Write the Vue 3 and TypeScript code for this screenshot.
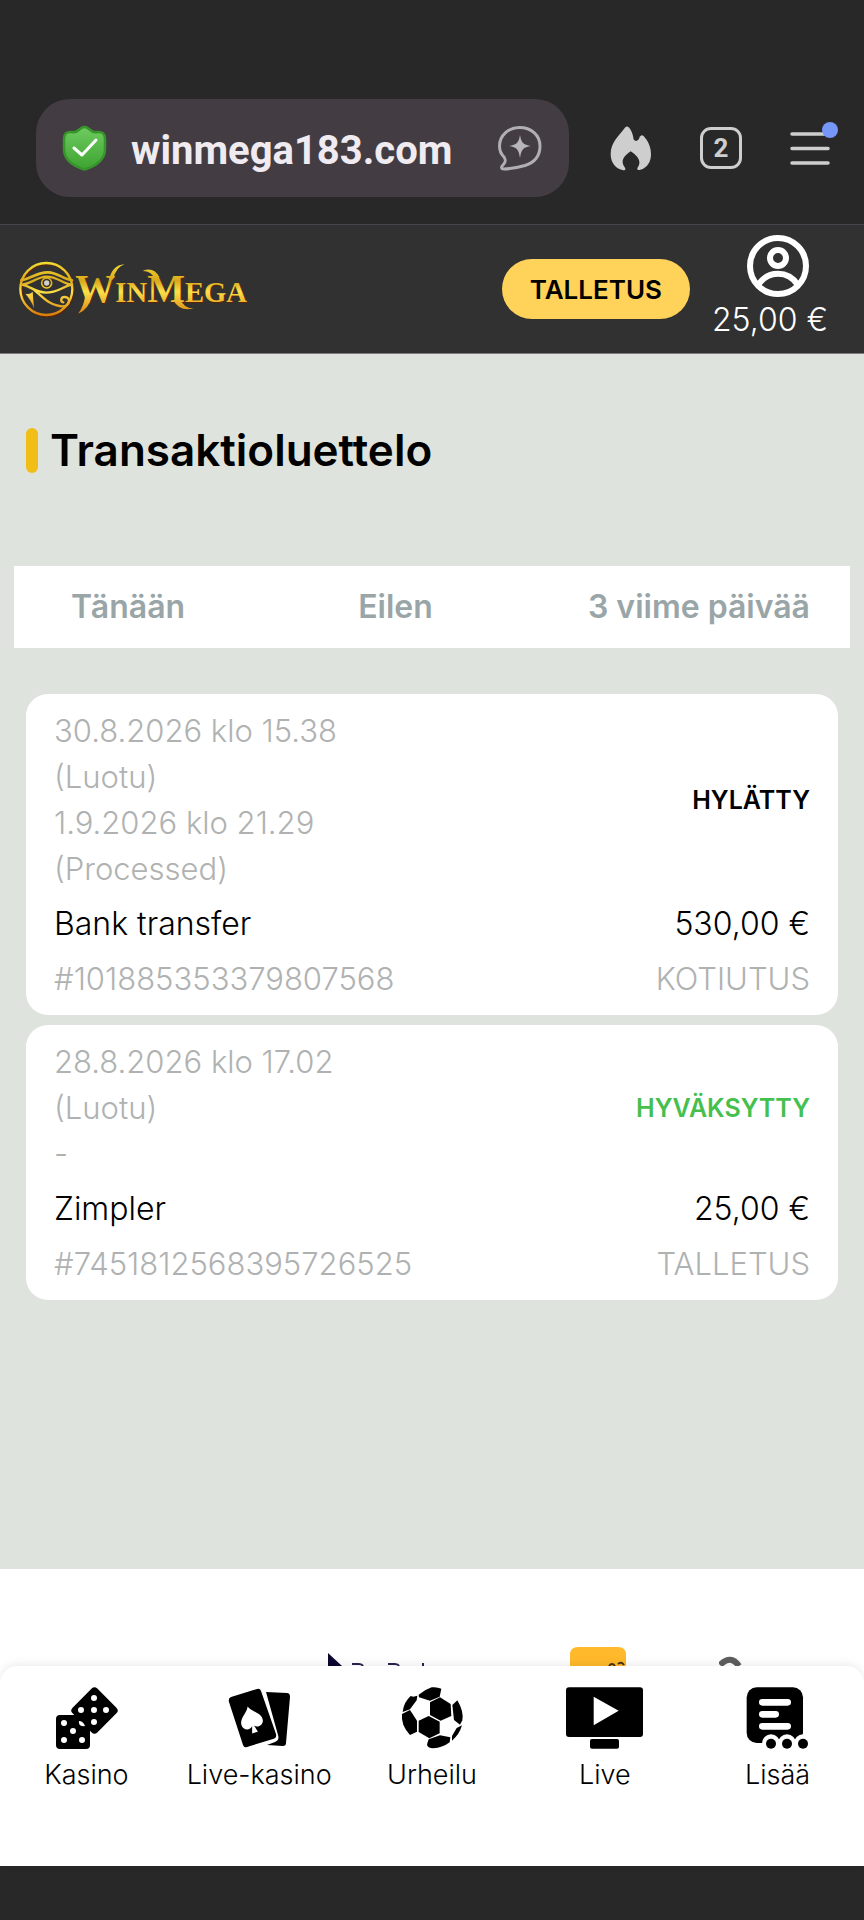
<script setup lang="ts">
import { ref } from 'vue'

interface Transaction {
  id: string
  dates: string[]
  status: string
  accepted: boolean
  method: string
  amount: string
  kind: string
}

const periods: string[] = ['Tänään', 'Eilen', '3 viime päivää']
const address = ref('winmega183.com')

const transactions: Transaction[] = [
  {
    id: '#101885353379807568',
    dates: ['30.8.2026 klo 15.38', '(Luotu)', '1.9.2026 klo 21.29', '(Processed)'],
    status: 'HYLÄTTY',
    accepted: false,
    method: 'Bank transfer',
    amount: '530,00 €',
    kind: 'KOTIUTUS',
  },
  {
    id: '#7451812568395726525',
    dates: ['28.8.2026 klo 17.02', '(Luotu)', '-'],
    status: 'HYVÄKSYTTY',
    accepted: true,
    method: 'Zimpler',
    amount: '25,00 €',
    kind: 'TALLETUS',
  },
]
</script>

<template>
  <div class="screen">
    <div class="browser">
      <div class="address">
        <svg class="shield" viewBox="0 0 45 46" aria-hidden="true">
          <defs>
            <linearGradient id="shieldFill" x1="0" y1="0" x2="0" y2="1">
              <stop offset="0" stop-color="#6fcb60" />
              <stop offset="1" stop-color="#3da331" />
            </linearGradient>
          </defs>
          <path d="M18 4q4.500-4 9 0 4 4 8 3 8-1 8 7v10c0 11-9 17-20.500 20.500C11 41 2 35 2 24V14q0-8 8-7 4 1 8-3z" fill="url(#shieldFill)" stroke="#37952b" stroke-width="2.500" />
          <path d="M12 23l8 7 14-15" fill="none" stroke="#fff" stroke-width="3" stroke-linecap="round" stroke-linejoin="round" />
        </svg>
        <input v-model="address" class="url" type="text" aria-label="Osoite" />
        <button type="button" aria-label="Avustaja">
          <svg width="46" height="46" viewBox="0 0 46 46" aria-hidden="true">
            <path d="M22.500 2.500C34 2.500 43 10 43 21c0 11-7 17-15 19.500-9 2.500-14 3.500-21 3.500-3 0-3-2-1-4 3-3 3-5 1-8C4 29 2.500 25 2.500 21 2.500 10 12 2.500 22.500 2.500z" fill="none" stroke="#b1afb1" stroke-width="3" stroke-linejoin="round" />
            <path d="M23 10c1.500 8 3 9.500 11 11-8 1.500-9.500 3-11 12-1.500-9-3-10.500-11-12 8-1.500 9.500-3 11-11z" fill="#b8b6b8" />
          </svg>
        </button>
      </div>
      <div class="tools">
        <button type="button" aria-label="Tyhjennä tiedot">
          <svg width="42" height="45" viewBox="150 136 126 134" aria-hidden="true">
            <path d="M196 139C178 163 152 184 152 220c0 25 16 45 38 48 8 0 7-5 4-9-14-20-2-34 18-48 21 14 34 30 21 49-3 5 0 9 8 7 21-7 32-24 32-47 0-24-11-42-23-55q-6-5-11 3c-2 12-12 16-18 8-2-16-7-28-14-36q-6-5-11-1z" fill="#cecece" />
          </svg>
        </button>
        <button class="tabs-count" type="button" aria-label="2 välilehteä">2</button>
        <button class="menu" type="button" aria-label="Valikko">
          <svg width="48" height="46" viewBox="0 0 48 46" aria-hidden="true">
            <path d="M2 15H38M2 29.500H38M2 44H38" fill="none" stroke="#cecece" stroke-width="3.500" stroke-linecap="round" />
            <circle cx="40" cy="11" r="8" fill="#7696f8" />
          </svg>
        </button>
      </div>
    </div>

    <header class="site">
      <a class="logo" href="#" aria-label="WinMega">
        <svg width="236" height="60" viewBox="12 24 708 180" aria-hidden="true">
          <defs>
            <linearGradient id="gold" gradientUnits="userSpaceOnUse" x1="0" y1="34" x2="0" y2="194">
              <stop offset="0" stop-color="#f0dc34" />
              <stop offset="0.350" stop-color="#d9a81c" />
              <stop offset="0.550" stop-color="#fbe04a" />
              <stop offset="1" stop-color="#d97c08" />
            </linearGradient>
          </defs>
          <circle cx="106" cy="117" r="78" fill="none" stroke="#5a2408" stroke-width="7" />
          <g fill="none" stroke="url(#gold)" stroke-width="7" stroke-linecap="round">
            <circle cx="103" cy="114" r="78" />
            <path d="M28 88C60 82 76 63 108 64c30 1 44 20 72 24" stroke-width="8" />
            <path d="M30 101c26-2 44-23 74-24 32 0 46 20 74 24-26 6-42 24-76 24-32 0-46-20-72-24z" />
            <path d="M68 118c22 18 46 48 84 48 22 0 26-28 6-28-12 0-14 14-4 16" />
          </g>
          <path d="M40 128q14 4 22-6l4 50q-8-24-26-44z" fill="url(#gold)" />
          <circle cx="104" cy="96" r="15" fill="#3a3020" stroke="url(#gold)" stroke-width="5" />
          <circle cx="104" cy="96" r="8" fill="#cfcfd2" />
          <text class="wordmark shade" x="193" y="155"><tspan class="big">W</tspan>IN<tspan class="big">M</tspan>EGA</text>
          <text class="wordmark" x="190" y="152"><tspan class="big">W</tspan>IN<tspan class="big">M</tspan>EGA</text>
          <g fill="url(#gold)">
            <path d="M290 92Q298 42 338 40 312 48 304 84zM238 138q-8 38-40 50 18-22 22-56z" />
            <path d="M430 88Q420 60 392 60 424 46 442 78zM502 140Q514 172 545 172 504 184 484 148z" />
          </g>
        </svg>
      </a>
      <button class="deposit" type="button">TALLETUS</button>
      <a class="account" href="#">
        <svg width="62" height="62" viewBox="0 0 62 62" fill="none" stroke="#fff" stroke-width="6" aria-hidden="true">
          <circle cx="31" cy="31" r="28" />
          <circle cx="31" cy="23" r="8" />
          <path d="M11 50c10-15 30-15 40 0" />
        </svg>
        <span>25,00 €</span>
      </a>
    </header>

    <main>
      <h1>Transaktioluettelo</h1>
      <nav class="periods" aria-label="Ajanjakso">
        <button v-for="period in periods" :key="period" type="button">{{ period }}</button>
      </nav>
      <section class="list">
        <article v-for="item in transactions" :key="item.id" class="card">
          <div class="row">
            <div class="muted">
              <div v-for="line in item.dates" :key="line">{{ line }}</div>
            </div>
            <strong class="status" :class="{ accepted: item.accepted }">{{ item.status }}</strong>
          </div>
          <div class="row">
            <span>{{ item.method }}</span>
            <span>{{ item.amount }}</span>
          </div>
          <div class="row muted">
            <span>{{ item.id }}</span>
            <span>{{ item.kind }}</span>
          </div>
        </article>
      </section>
    </main>

    <footer class="partners">
      <svg width="108" height="13" viewBox="0 0 108 13" aria-hidden="true">
        <path d="M0 0L14 13H0z" fill="#0c0630" />
        <path d="M24 11h7q3 0 4 2M60 11h7q3 0 4 2M95 10v3" fill="none" stroke="#2c2250" stroke-width="2" />
      </svg>
      <svg width="56" height="19" viewBox="0 0 56 19" aria-hidden="true">
        <path d="M0 19V8q0-8 8-8h40q8 0 8 8v11z" fill="#ffb92a" />
        <path d="M39 19q3-4 6 0M48 17q3-3 6 1" fill="none" stroke="#4a3410" stroke-width="2" />
      </svg>
      <svg width="24" height="10" viewBox="0 0 24 10" aria-hidden="true">
        <path d="M1 9q11-11 19 1" fill="none" stroke="#5e5e5e" stroke-width="6" />
      </svg>
    </footer>

    <div class="dock">
      <nav class="bottom" aria-label="Päävalikko">
        <a href="#">
          <svg width="64" height="64" viewBox="0 0 64 64" aria-hidden="true">
            <rect x="23" y="8" width="35" height="35" rx="4" transform="rotate(45 40.500 25.500)" />
            <rect x="2" y="30" width="34" height="34" rx="4" />
            <g fill="#fff">
              <circle cx="40" cy="13" r="3" /><circle cx="27" cy="25" r="3" /><circle cx="40" cy="25" r="3" />
              <circle cx="52" cy="25" r="3" /><circle cx="40" cy="37" r="3" />
              <circle cx="10" cy="38" r="3" /><path d="M25 36q4 0 6 5-7 1-6-5z" /><circle cx="19" cy="46" r="3" />
              <circle cx="10" cy="55" r="3" /><circle cx="28" cy="55" r="3" />
            </g>
          </svg>
          <span>Kasino</span>
        </a>
        <a href="#">
          <svg width="64" height="64" viewBox="0 0 64 64" aria-hidden="true">
            <path d="M4 12L30 4q3-1 4 2l15 43q1 4-3 5L20 62q-3 1-4-2L2 17q-1-4 2-5z" />
            <path d="M39 7l21 1q3 0 3 4l-4 46q0 3-3 3l-16-1 8-3q5-2 3-7z" />
            <g transform="rotate(-16 25 37)">
              <path d="M25 21c2 6 11 9 11 16 0 6-7 8-10 4l2 7h-6l2-7c-3 4-10 2-10-4 0-7 9-10 11-16z" fill="#fff" />
            </g>
          </svg>
          <span>Live-kasino</span>
        </a>
        <a href="#">
          <svg width="64" height="64" viewBox="240 135 192 192" aria-hidden="true">
            <path d="M296 164Q312 150 335 142q16-2 29 4l-5 24-29 12-33-10z" />
            <path d="M272 168l8 2 12-3-2 14-20 27-22 8q2-28 24-48z" />
            <path d="M330 187l30-15 32 20 2 36-32 14-32-17z" />
            <path d="M397 195l15-14q20 34 15 60l-7 13-18-14z" />
            <path d="M296 242l30-14 33 17v35l-31 15-32-19z" />
            <path d="M246 222l24-12 21 32v33l-21 10q-28-30-24-63z" />
            <path d="M426 256q-8 28-30 46v-14l14-24z" />
            <path d="M326 298l34-12 31 6-2 15q-26 20-57 17-14-4-10-14z" />
          </svg>
          <span>Urheilu</span>
        </a>
        <a href="#">
          <svg width="78" height="64" viewBox="18 135 234 192" aria-hidden="true">
            <rect x="18" y="142" width="231" height="149" rx="9" />
            <rect x="90" y="297" width="87" height="29" rx="6" />
            <path d="M101 170l75 42-75 44z" fill="#fff" />
          </svg>
          <span>Live</span>
        </a>
        <a href="#">
          <svg width="64" height="64" viewBox="558 135 192 192" aria-hidden="true">
            <rect x="560" y="142" width="169" height="167" rx="30" />
            <g fill="#fff">
              <rect x="597" y="177" width="96" height="20" rx="10" />
              <rect x="597" y="213" width="60" height="20" rx="10" />
              <rect x="597" y="249" width="96" height="20" rx="10" />
              <circle cx="633" cy="310" r="27" /><circle cx="681" cy="310" r="27" /><circle cx="729" cy="310" r="27" />
            </g>
            <circle cx="633" cy="311" r="15" /><circle cx="681" cy="311" r="15" /><circle cx="729" cy="311" r="15" />
          </svg>
          <span>Lisää</span>
        </a>
      </nav>
    </div>
    <div class="system"></div>
  </div>
</template>

<style>
body {
  margin: 0;
  background: #282828;
}
</style>

<style scoped>
.screen {
  font-family: Inter, "Liberation Sans", sans-serif;
  font-size: 32px;
  font-weight: 300;
  color: #000;
}

.screen * {
  box-sizing: border-box;
}

svg {
  display: block;
  flex: none;
}

button {
  font: inherit;
  color: inherit;
  border: 0;
  padding: 0;
  background: none;
}

a {
  color: inherit;
  text-decoration: none;
}

.browser {
  display: flex;
  align-items: center;
  gap: 41px;
  padding: 99px 26px 27px 36px;
  background: #282828;
}

.address {
  flex: 1;
  min-width: 0;
  display: flex;
  align-items: center;
  gap: 24px;
  height: 98px;
  padding: 0 26px;
  border-radius: 34px;
  background: #433d43;
}

.shield {
  width: 45px;
  height: 46px;
}

.url {
  flex: 1;
  min-width: 0;
  padding: 4px 0 0;
  border: 0;
  background: none;
  outline: 0;
  color: #f0ebf0;
  font: 700 40px Roboto, sans-serif;
}

.tools {
  display: flex;
  align-items: center;
  gap: 48px;
}

.tabs-count {
  width: 42px;
  height: 42px;
  border: 3px solid #cecece;
  border-radius: 11px;
  color: #cecece;
  font: 700 26px/34px Roboto, sans-serif;
}

.menu {
  padding-bottom: 12px;
}

.site {
  display: flex;
  align-items: center;
  padding: 0 36px 0 16px;
  height: 130px;
  border-top: 1px solid #44484c;
  border-bottom: 1px solid #7b7d7b;
  background: #313131;
}

.logo {
  margin-right: auto;
}

.wordmark {
  font: 700 86px "Liberation Serif", serif;
  fill: url(#gold);
}

.wordmark.shade {
  fill: #5a2408;
}

.big {
  font-size: 120px;
}

.deposit {
  height: 60px;
  padding: 0 28px;
  border-radius: 30px;
  background: #ffd25a;
  color: #000;
  font-size: 26px;
  font-weight: 600;
}

.account {
  display: flex;
  flex-direction: column;
  align-items: center;
  margin-left: 22px;
  color: #fff;
  line-height: 46px;
}

.account svg {
  margin-left: 16px;
}

main {
  padding: 64px 14px 269px;
  background: #dfe3dd;
}

h1 {
  display: flex;
  align-items: center;
  gap: 12px;
  margin: 0 12px 84px;
  font-size: 44px;
  font-weight: 600;
  line-height: 64px;
}

h1::before {
  content: "";
  width: 12px;
  height: 45px;
  border-radius: 6px;
  background: #f1be18;
}

.periods {
  display: grid;
  grid-template-columns: 5fr 4fr auto;
  justify-items: start;
  padding: 0 40px 0 57px;
  background: #fff;
  color: #99a5a7;
  font-weight: 600;
  line-height: 82px;
}

.list {
  display: grid;
  gap: 10px;
  margin: 46px 12px 0;
}

.card {
  display: grid;
  gap: 9px;
  padding: 14px 28px 13px;
  border-radius: 22px;
  background: #fff;
  line-height: 46px;
}

.row {
  display: flex;
  align-items: center;
  justify-content: space-between;
}

.muted {
  color: #b0b2b2;
  font-size: 31px;
}

.status {
  font-size: 25px;
  font-weight: 600;
}

.status.accepted {
  color: #45bf4d;
}

.partners {
  display: grid;
  grid-template-columns: 101fr 44fr 27fr 28fr;
  align-items: end;
  justify-items: end;
  height: 97px;
  background: #fff;
}

.dock {
  background: #fff;
}

.bottom {
  position: relative;
  display: grid;
  grid-template-columns: repeat(5, 1fr);
  justify-items: center;
  min-height: 200px;
  padding-top: 19px;
  border-radius: 18px 18px 0 0;
  background: #fff;
  box-shadow: 0 -2px 10px rgba(0, 0, 0, 0.08);
  font-size: 27px;
}

.bottom a {
  display: flex;
  flex-direction: column;
  align-items: center;
  gap: 8px;
  line-height: 36px;
}

.system {
  height: 54px;
  background: #282828;
}
</style>
